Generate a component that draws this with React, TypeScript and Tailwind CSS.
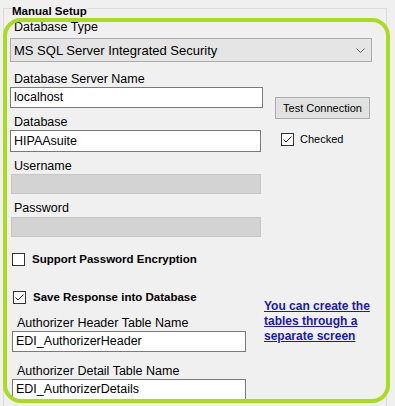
import React from "react";

function Check({ checked }: { checked: boolean }) {
  return (
    <div className="w-[13px] h-[13px] shrink-0 border border-[#333333] bg-white flex items-center justify-center">
      {checked && (
        <svg width="11" height="11" viewBox="0 0 11 11">
          <path d="M1.5 5.5 L4 8 L9.5 2.5" fill="none" stroke="#333333" strokeWidth="1" />
        </svg>
      )}
    </div>
  );
}

function TextBox({ value, className }: { value: string; className: string }) {
  return (
    <div
      className={
        "bg-white border border-[#7a7a7a] flex items-center pl-[3px] text-[12.5px] leading-[15px] " + className
      }
    >
      {value}
    </div>
  );
}

export default function App() {
  return (
    <div className="relative w-[395px] h-[406px] overflow-hidden bg-[#f0f0f0] text-black font-['Liberation_Sans',Arial,sans-serif]">
      <div className="relative ml-[3px] mt-[8px] w-[384px] h-[420px] border border-[#dcdcdc] pl-[6px] pt-[11px]">
        <span className="absolute left-[8px] top-[-5px] bg-[#f0f0f0] text-[11.5px] leading-[14px] font-bold">
          Manual Setup
        </span>

        <div className="ml-[4px] text-[12.5px] leading-[15px]">Database Type</div>
        <div className="mt-[3px] w-[362px] h-[24px] bg-[#e5e5e5] border border-[#acacac] flex items-center justify-between pl-[3px] pr-[6px] text-[13px] leading-[15px]">
          <span>MS SQL Server Integrated Security</span>
          <svg width="9" height="5" viewBox="0 0 9 5">
            <path d="M0.5 0.5 L4.5 4.5 L8.5 0.5" fill="none" stroke="#606060" strokeWidth="1" />
          </svg>
        </div>

        <div className="mt-[10px] flex">
          <div className="flex flex-col w-[253px]">
            <div className="ml-[4px] text-[12.5px] leading-[15px]">Database Server Name</div>
            <TextBox value="localhost" className="w-[253px] h-[21px]" />
            <div className="mt-[7px] ml-[4px] text-[12.5px] leading-[15px]">Database</div>
            <TextBox value="HIPAAsuite" className="w-[251px] h-[22px]" />
          </div>
          <div className="ml-[12px] flex flex-col pt-[25px]">
            <button className="w-[95px] h-[22px] bg-[#e1e1e1] border border-[#adadad] text-[11px] leading-[13px] flex items-center justify-center">
              Test Connection
            </button>
            <div className="mt-[14px] ml-[6px] flex items-center gap-[6px] text-[11px] leading-[13px]">
              <Check checked />
              <span>Checked</span>
            </div>
          </div>
        </div>

        <div className="mt-[7px] ml-[4px] text-[12.5px] leading-[15px]">Username</div>
        <div className="ml-[1px] w-[250px] h-[20px] bg-[#d3d3d3] border border-[#c6c6c6]" />
        <div className="mt-[7px] ml-[4px] text-[12.5px] leading-[15px]">Password</div>
        <div className="mt-[1px] ml-[1px] w-[250px] h-[20px] bg-[#d3d3d3] border border-[#c6c6c6]" />

        <div className="mt-[15px] ml-[2px] flex items-center gap-[7px]">
          <Check checked={false} />
          <span className="text-[11.5px] leading-[14px] font-bold">Support Password Encryption</span>
        </div>

        <div className="mt-[24px] flex">
          <div className="flex flex-col w-[254px]">
            <div className="ml-[3px] flex items-center gap-[7px]">
              <Check checked />
              <span className="text-[11.5px] leading-[14px] font-bold">Save Response into Database</span>
            </div>
            <div className="mt-[12px] ml-[7px] text-[12.5px] leading-[15px]">Authorizer Header Table Name</div>
            <TextBox value="EDI_AuthorizerHeader" className="ml-[2px] w-[234px] h-[21px]" />
            <div className="mt-[12px] ml-[7px] text-[12.5px] leading-[15px]">Authorizer Detail Table Name</div>
            <TextBox value="EDI_AuthorizerDetails" className="ml-[2px] w-[234px] h-[21px]" />
          </div>
          <div className="pt-[9px]">
            <a className="block text-[12px] leading-[15px] font-bold text-[#1a1ab4] underline">
              You can create the
              <br />
              tables through a
              <br />
              separate screen
            </a>
          </div>
        </div>
      </div>

      <div className="pointer-events-none absolute left-[3px] top-[18px] w-[387px] h-[385px] border-[4px] border-[#a8dc1c] rounded-[18px]" />
    </div>
  );
}
